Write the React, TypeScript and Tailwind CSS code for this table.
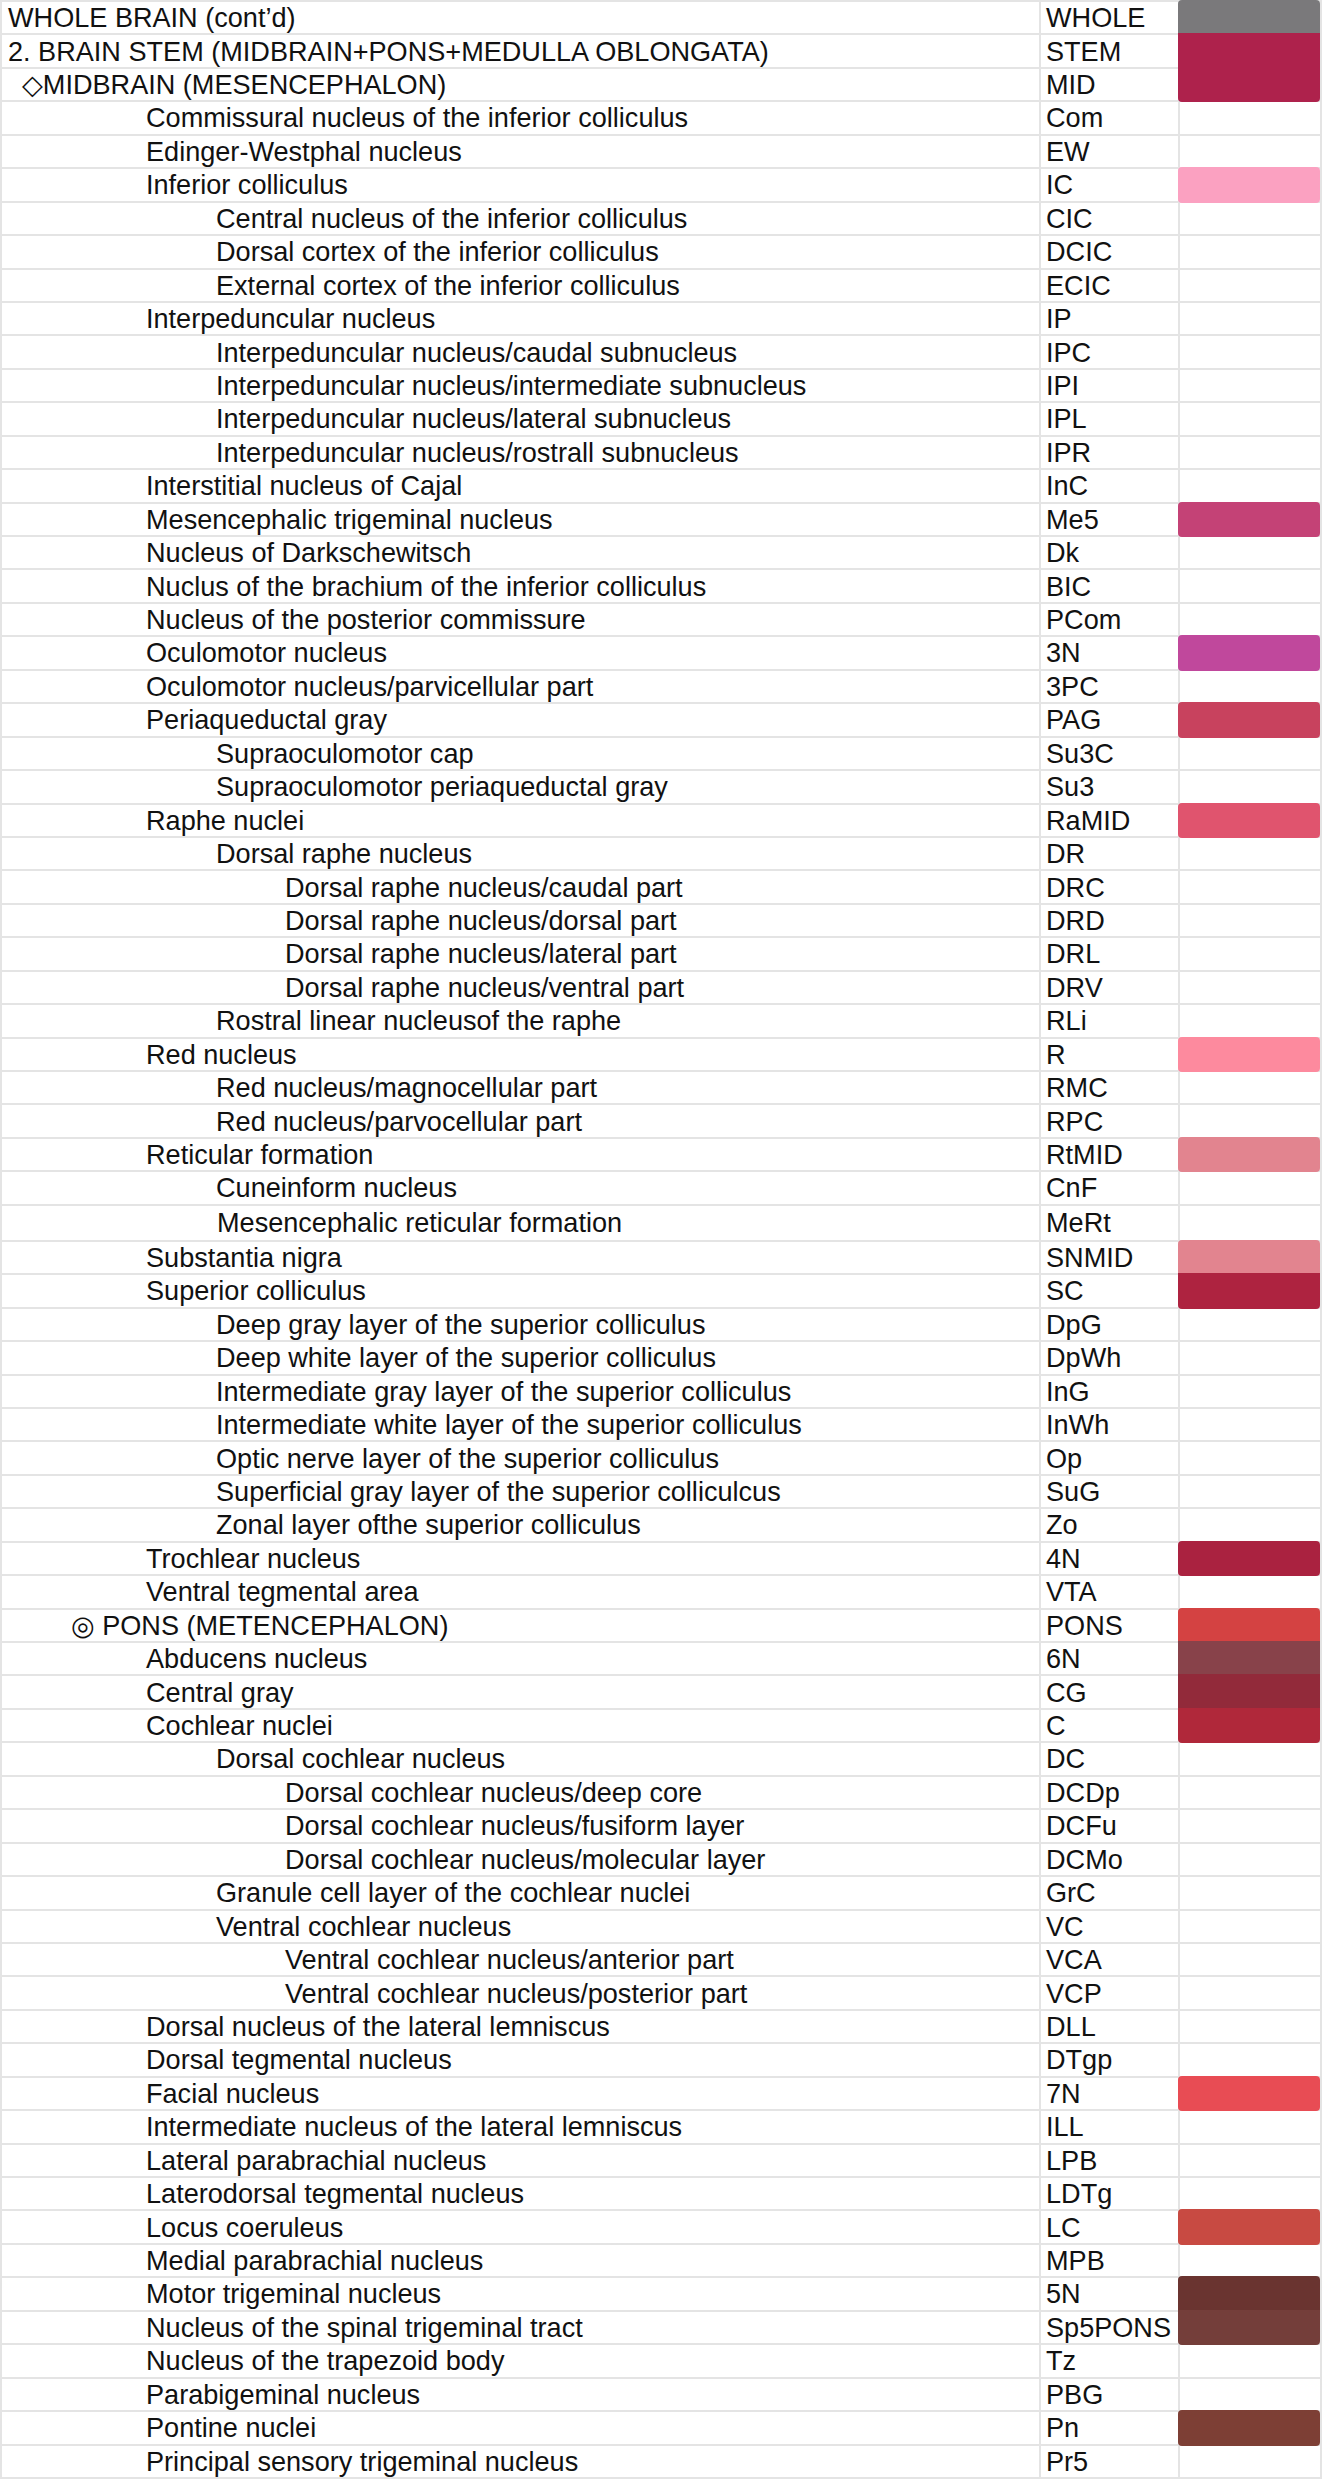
type Row = {
    level: number;
    name: string;
    abbr: string;
    color?: string;
    tall?: boolean;
};

// indent per level: 0 = top heading, 1 = midbrain, 2 = pons, 3..5 = nesting
const indents = ["pl-[6px]", "pl-[20px]", "pl-[69px]", "pl-[144px]", "pl-[214px]", "pl-[283px]"];

const rows: Row[] = [
    { level: 0, name: "WHOLE BRAIN (cont\u2019d)", abbr: "WHOLE", color: "bg-[#7a797b]" },
    { level: 0, name: "2. BRAIN STEM (MIDBRAIN+PONS+MEDULLA OBLONGATA)", abbr: "STEM", color: "bg-[#ae224c]" },
    { level: 1, name: "\u25C7MIDBRAIN (MESENCEPHALON)", abbr: "MID", color: "bg-[#ae224c]" },
    { level: 3, name: "Commissural nucleus of the inferior colliculus", abbr: "Com" },
    { level: 3, name: "Edinger-Westphal nucleus", abbr: "EW" },
    { level: 3, name: "Inferior colliculus", abbr: "IC", color: "bg-[#fba1c1]" },
    { level: 4, name: "Central nucleus of the inferior colliculus", abbr: "CIC" },
    { level: 4, name: "Dorsal cortex of the inferior colliculus", abbr: "DCIC" },
    { level: 4, name: "External cortex of the inferior colliculus", abbr: "ECIC" },
    { level: 3, name: "Interpeduncular nucleus", abbr: "IP" },
    { level: 4, name: "Interpeduncular nucleus/caudal subnucleus", abbr: "IPC" },
    { level: 4, name: "Interpeduncular nucleus/intermediate subnucleus", abbr: "IPI" },
    { level: 4, name: "Interpeduncular nucleus/lateral subnucleus", abbr: "IPL" },
    { level: 4, name: "Interpeduncular nucleus/rostrall subnucleus", abbr: "IPR" },
    { level: 3, name: "Interstitial nucleus of Cajal", abbr: "InC" },
    { level: 3, name: "Mesencephalic trigeminal nucleus", abbr: "Me5", color: "bg-[#c44276]" },
    { level: 3, name: "Nucleus of Darkschewitsch", abbr: "Dk" },
    { level: 3, name: "Nuclus of the brachium of the inferior colliculus", abbr: "BIC" },
    { level: 3, name: "Nucleus of the posterior commissure", abbr: "PCom" },
    { level: 3, name: "Oculomotor nucleus", abbr: "3N", color: "bg-[#c0489c]" },
    { level: 3, name: "Oculomotor nucleus/parvicellular part", abbr: "3PC" },
    { level: 3, name: "Periaqueductal gray", abbr: "PAG", color: "bg-[#c8425e]" },
    { level: 4, name: "Supraoculomotor cap", abbr: "Su3C" },
    { level: 4, name: "Supraoculomotor periaqueductal gray", abbr: "Su3" },
    { level: 3, name: "Raphe nuclei", abbr: "RaMID", color: "bg-[#e0546e]" },
    { level: 4, name: "Dorsal raphe nucleus", abbr: "DR" },
    { level: 5, name: "Dorsal raphe nucleus/caudal part", abbr: "DRC" },
    { level: 5, name: "Dorsal raphe nucleus/dorsal part", abbr: "DRD" },
    { level: 5, name: "Dorsal raphe nucleus/lateral part", abbr: "DRL" },
    { level: 5, name: "Dorsal raphe nucleus/ventral part", abbr: "DRV" },
    { level: 4, name: "Rostral linear nucleusof the raphe", abbr: "RLi" },
    { level: 3, name: "Red nucleus", abbr: "R", color: "bg-[#fd8a9e]" },
    { level: 4, name: "Red nucleus/magnocellular part", abbr: "RMC" },
    { level: 4, name: "Red nucleus/parvocellular part", abbr: "RPC" },
    { level: 3, name: "Reticular formation", abbr: "RtMID", color: "bg-[#e2848f]" },
    { level: 4, name: "Cuneinform nucleus", abbr: "CnF" },
    { level: 4, name: "Mesencephalic reticular formation", abbr: "MeRt", tall: true },
    { level: 3, name: "Substantia nigra", abbr: "SNMID", color: "bg-[#e2848f]" },
    { level: 3, name: "Superior colliculus", abbr: "SC", color: "bg-[#ae2340]" },
    { level: 4, name: "Deep gray layer of the superior colliculus", abbr: "DpG" },
    { level: 4, name: "Deep white layer of the superior colliculus", abbr: "DpWh" },
    { level: 4, name: "Intermediate gray layer of the superior colliculus", abbr: "InG" },
    { level: 4, name: "Intermediate white layer of the superior colliculus", abbr: "InWh" },
    { level: 4, name: "Optic nerve layer of the superior colliculus", abbr: "Op" },
    { level: 4, name: "Superficial gray layer of the superior colliculcus", abbr: "SuG" },
    { level: 4, name: "Zonal layer ofthe superior colliculus", abbr: "Zo" },
    { level: 3, name: "Trochlear nucleus", abbr: "4N", color: "bg-[#aa2240]" },
    { level: 3, name: "Ventral tegmental area", abbr: "VTA" },
    { level: 2, name: "\u25CE PONS (METENCEPHALON)", abbr: "PONS", color: "bg-[#d44242]" },
    { level: 3, name: "Abducens nucleus", abbr: "6N", color: "bg-[#88424a]" },
    { level: 3, name: "Central gray", abbr: "CG", color: "bg-[#922a3a]" },
    { level: 3, name: "Cochlear nuclei", abbr: "C", color: "bg-[#b0283a]" },
    { level: 4, name: "Dorsal cochlear nucleus", abbr: "DC" },
    { level: 5, name: "Dorsal cochlear nucleus/deep core", abbr: "DCDp" },
    { level: 5, name: "Dorsal cochlear nucleus/fusiform layer", abbr: "DCFu" },
    { level: 5, name: "Dorsal cochlear nucleus/molecular layer", abbr: "DCMo" },
    { level: 4, name: "Granule cell layer of the cochlear nuclei", abbr: "GrC" },
    { level: 4, name: "Ventral cochlear nucleus", abbr: "VC" },
    { level: 5, name: "Ventral cochlear nucleus/anterior part", abbr: "VCA" },
    { level: 5, name: "Ventral cochlear nucleus/posterior part", abbr: "VCP" },
    { level: 3, name: "Dorsal nucleus of the lateral lemniscus", abbr: "DLL" },
    { level: 3, name: "Dorsal tegmental nucleus", abbr: "DTgp" },
    { level: 3, name: "Facial nucleus", abbr: "7N", color: "bg-[#e84c54]" },
    { level: 3, name: "Intermediate nucleus of the lateral lemniscus", abbr: "ILL" },
    { level: 3, name: "Lateral parabrachial nucleus", abbr: "LPB" },
    { level: 3, name: "Laterodorsal tegmental nucleus", abbr: "LDTg" },
    { level: 3, name: "Locus coeruleus", abbr: "LC", color: "bg-[#c84a42]" },
    { level: 3, name: "Medial parabrachial nucleus", abbr: "MPB" },
    { level: 3, name: "Motor trigeminal nucleus", abbr: "5N", color: "bg-[#6a3430]" },
    { level: 3, name: "Nucleus of the spinal trigeminal tract", abbr: "Sp5PONS", color: "bg-[#743e3a]" },
    { level: 3, name: "Nucleus of the trapezoid body", abbr: "Tz" },
    { level: 3, name: "Parabigeminal nucleus", abbr: "PBG" },
    { level: 3, name: "Pontine nuclei", abbr: "Pn", color: "bg-[#7d3f35]" },
    { level: 3, name: "Principal sensory trigeminal nucleus", abbr: "Pr5" },
];

function App(): React.ReactElement {
    return (
        <div className="w-[1325px] bg-white text-[#111] font-['Liberation_Sans',Arial,'DejaVu_Sans',sans-serif] text-[27.1px] leading-none">
            <div className="w-[1322px] border-t-2 border-l-2 border-[#e4e4e4]">
                {rows.map((row, i) => {
                    const prev = rows[i - 1];
                    const next = rows[i + 1];
                    const roundTop = !prev || !prev.color;
                    const roundBottom = !next || !next.color;
                    return (
                        <div
                            key={row.abbr}
                            className={
                                "grid grid-cols-[1039px_139px_142px] " +
                                (row.tall ? "h-[36px]" : "h-[33.45px]")
                            }
                        >
                            {/* name */}
                            <div
                                className={
                                    "flex border-r-2 border-b-2 border-[#e4e4e4] whitespace-nowrap " +
                                    indents[row.level] +
                                    (row.tall ? " items-start pt-[3px] pl-[215px]" : " items-center")
                                }
                            >
                                {row.name}
                            </div>

                            {/* abbreviation */}
                            <div className="flex items-center pl-[5px] border-r-2 border-b-2 border-[#e4e4e4] whitespace-nowrap">
                                {row.abbr}
                            </div>

                            {/* colour swatch */}
                            <div className="relative border-r-2 border-b-2 border-[#e4e4e4]">
                                {row.color && (
                                    <div
                                        className={
                                            "absolute -top-[2px] -bottom-[2px] -left-[2px] right-0 " +
                                            row.color +
                                            (roundTop ? " rounded-t-[4px]" : "") +
                                            (roundBottom ? " rounded-b-[4px]" : "")
                                        }
                                    />
                                )}
                            </div>
                        </div>
                    );
                })}
            </div>
        </div>
    );
}

export default App;
